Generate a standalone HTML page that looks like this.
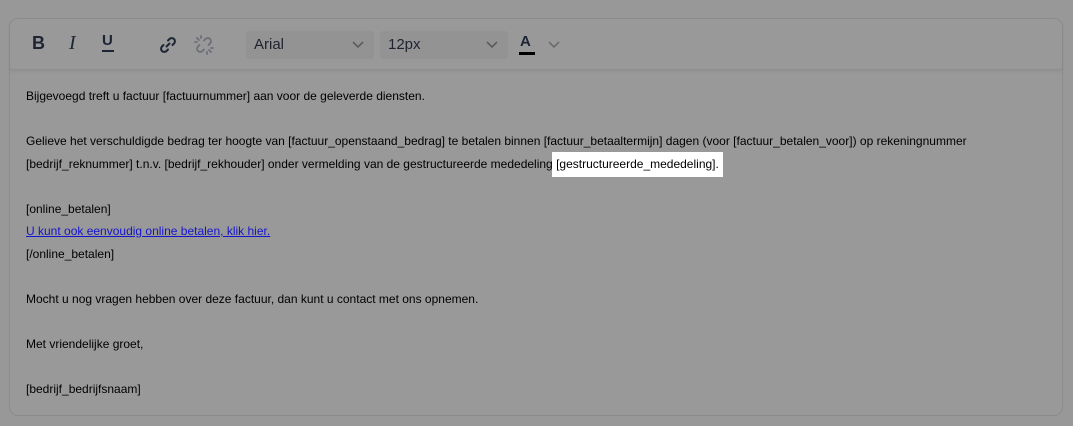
<!DOCTYPE html>
<html><head><meta charset="utf-8"><style>
html,body{margin:0;padding:0;}
body{width:1073px;height:426px;background:#989898;position:relative;overflow:hidden;font-family:"Liberation Sans",Arial,sans-serif;}
.ed{position:absolute;left:9px;top:18px;width:1052px;height:396px;border:1px solid #8c8c8c;border-radius:9px;background:#999;}
.tb{position:absolute;left:0;top:0;width:1052px;height:50px;border-bottom:1px solid #8e8e8e;box-shadow:0 2px 3px rgba(0,0,0,0.06);}
.ic{position:absolute;color:#1d2433;}
.sel{position:absolute;top:12px;height:28px;background:#939393;border-radius:4px;font-size:15px;color:#1f2330;line-height:28px;padding-left:8px;box-sizing:border-box;}
.sel svg{position:absolute;right:10px;top:10px;}
.txt{position:absolute;left:16px;top:66px;font-size:12px;color:#000;line-height:22.5px;}
.txt p{margin:0;white-space:nowrap;}
.hl{background:#fff;padding:5px 4px 6px 4px;margin-left:-4px;}
a{color:#1515cc;text-decoration:underline;}
</style></head><body>
<div class="ed">
<div class="tb">
 <div class="ic" style="left:22px;top:14px;font-size:18px;font-weight:bold;">B</div>
 <div class="ic" style="left:59px;top:13px;font-size:20px;font-style:italic;font-family:'Liberation Serif',serif;">I</div>
 <div class="ic" style="left:92px;top:14px;font-size:15px;font-weight:bold;line-height:15px;">U<div style="height:2px;background:#1d2433;width:12px;margin-top:2px"></div></div>
 <svg style="position:absolute;left:148px;top:16px" width="20" height="20" viewBox="0 0 20 20" fill="none" stroke="#1d2433" stroke-width="2" stroke-linecap="round"><path d="M8.5 11.5l3-3"/><path d="M10 5.5l1.5-1.5a3 3 0 0 1 4.5 4.5l-1.5 1.5"/><path d="M10 14.5l-1.5 1.5a3 3 0 0 1-4.5-4.5l1.5-1.5"/></svg>
 <svg style="position:absolute;left:184px;top:16px" width="20" height="20" viewBox="0 0 20 20" fill="none" stroke="#6b6f78" stroke-width="1.8" stroke-linecap="round"><path d="M10 5.5l1.5-1.5a3 3 0 0 1 4.5 4.5l-1.5 1.5"/><path d="M10 14.5l-1.5 1.5a3 3 0 0 1-4.5-4.5l1.5-1.5"/><path d="M3 3l2 2M7 1v2M1 7h2M17 17l-2-2M13 19v-2M19 13h-2"/></svg>
 <div class="sel" style="left:236px;width:128px;">Arial<svg width="12" height="8" viewBox="0 0 12 8" fill="none" stroke="#555" stroke-width="1.5"><path d="M1 1l5 5 5-5"/></svg></div>
 <div class="sel" style="left:370px;width:128px;">12px<svg width="12" height="8" viewBox="0 0 12 8" fill="none" stroke="#555" stroke-width="1.5"><path d="M1 1l5 5 5-5"/></svg></div>
 <div class="ic" style="left:510px;top:15px;font-size:15px;font-weight:bold;line-height:15px;">A<div style="height:3px;background:#000;width:16px;margin:3px 0 0 -1px"></div></div>
 <svg style="position:absolute;left:538px;top:22px" width="12" height="8" viewBox="0 0 12 8" fill="none" stroke="#666" stroke-width="1.5"><path d="M1 1l5 5 5-5"/></svg>
</div>
<div class="txt">
<p>Bijgevoegd treft u factuur [factuurnummer] aan voor de geleverde diensten.</p>
<p>&nbsp;</p>
<p>Gelieve het verschuldigde bedrag ter hoogte van [factuur_openstaand_bedrag] te betalen binnen [factuur_betaaltermijn] dagen (voor [factuur_betalen_voor]) op rekeningnummer</p>
<p>[bedrijf_reknummer] t.n.v. [bedrijf_rekhouder] onder vermelding van de gestructureerde mededeling <span class="hl">[gestructureerde_mededeling].</span></p>
<p>&nbsp;</p>
<p>[online_betalen]</p>
<p><a>U kunt ook eenvoudig online betalen, klik hier.</a></p>
<p>[/online_betalen]</p>
<p>&nbsp;</p>
<p>Mocht u nog vragen hebben over deze factuur, dan kunt u contact met ons opnemen.</p>
<p>&nbsp;</p>
<p>Met vriendelijke groet,</p>
<p>&nbsp;</p>
<p>[bedrijf_bedrijfsnaam]</p>
</div>
</div>
</body></html>
